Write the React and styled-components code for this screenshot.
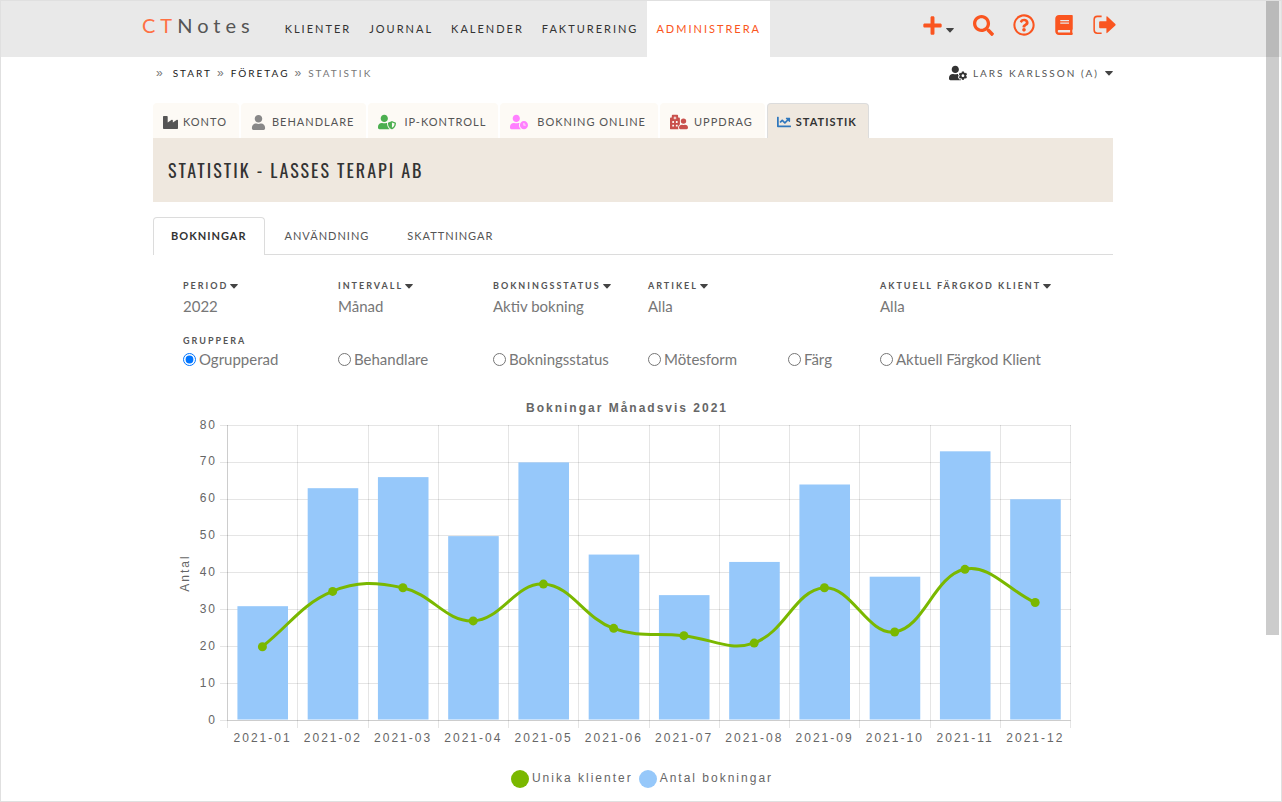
import styled, { createGlobalStyle } from 'styled-components'
import {
  FaBook,
  FaChartLine,
  FaHospitalUser,
  FaIndustry,
  FaPlus,
  FaRegQuestionCircle,
  FaSearch,
  FaUser,
  FaUserClock,
  FaUserCog,
  FaUserShield
} from 'react-icons/fa'

const GlobalStyle = createGlobalStyle`
  * {
    box-sizing: border-box;
  }
  body {
    margin: 0;
    background-color: #fff;
    color: #555;
    font-family: Lato, 'Liberation Sans', sans-serif;
    font-size: 12px;
    line-height: 16px;
  }
  button {
    border: 0;
    padding: 0;
    background: none;
    color: inherit;
    font: inherit;
    letter-spacing: inherit;
    text-transform: inherit;
    cursor: pointer;
  }
  a {
    color: inherit;
    text-decoration: none;
  }
  svg {
    display: block;
    flex: none;
  }
`

const Page = styled.div`
  position: relative;
  min-height: 100vh;
  border: 1px solid #e0e0e0;
`
const ScrollThumb = styled.div`
  position: absolute;
  top: 0;
  right: 2px;
  width: 13px;
  height: calc(100vh - 168px);
  background-color: rgba(0, 0, 0, 0.2);
`

const Header = styled.header`
  padding-right: 16px;
  background-color: #e9e9e9;
`
const HeaderInner = styled.div`
  display: flex;
  max-width: 982px;
  height: 56px;
  margin: 0 auto;
  padding-right: 8px;
`
const Logo = styled.a`
  margin-right: 21px;
  color: #555;
  font-size: 20px;
  line-height: 48px;
  letter-spacing: 5px;
  span {
    color: #ff7043;
  }
`
const Nav = styled.nav`
  display: flex;
  flex: 1;
`
const NavLink = styled.a`
  padding: 0 9px;
  background-color: ${({ $active }) => ($active ? '#fff' : 'transparent')};
  color: ${({ $active }) => ($active ? '#fa5520' : '#333')};
  font-size: 11px;
  line-height: 56px;
  letter-spacing: 2px;
  text-transform: uppercase;
`
const Tools = styled.div`
  display: flex;
  align-items: center;
  gap: 19px;
  height: 48px;
  color: #fa5520;
`
const ToolButton = styled.button`
  display: flex;
  align-items: center;
  gap: 3px;
`
const CaretSvg = styled.svg`
  margin-top: ${({ $drop }) => $drop}px;
  color: #444;
`
const Caret = ({ drop = 1 }) => (
  <CaretSvg $drop={drop} width="8" height="5" viewBox="0 0 8 5">
    <path d="M.6 0H7.400Q8.200 .1 7.700 .8L4.500 4.200Q4 4.700 3.500 4.200L.3 .8Q-.2 .1 .6 0Z" fill="currentColor" />
  </CaretSvg>
)

const Main = styled.div`
  padding-right: 16px;
`
const Column = styled.main`
  max-width: 960px;
  margin: 0 auto;
`
const TopRow = styled.div`
  display: flex;
  align-items: center;
  justify-content: space-between;
  height: 32px;
`
const Crumbs = styled.nav`
  display: flex;
  gap: 5px;
  padding-left: 3px;
  color: #777;
  font-size: 10px;
  letter-spacing: 2px;
  text-transform: uppercase;
  a {
    color: #222;
  }
`
const Separator = styled.span`
  font-family: 'Liberation Sans', Arial, sans-serif;
  font-size: 12px;
  &:first-child {
    margin-right: 3px;
  }
`
const UserMenu = styled.button`
  display: flex;
  align-items: center;
  gap: 6px;
  color: #555;
  font-size: 10px;
  letter-spacing: 2px;
  text-transform: uppercase;
`

const Tabs = styled.nav`
  display: flex;
  gap: 2px;
  margin-top: 14px;
`
const Tab = styled.a`
  display: flex;
  align-items: center;
  gap: ${({ $gap }) => $gap}px;
  height: 35px;
  padding: 2px 11px 0 9px;
  border: 1px solid ${({ $active }) => ($active ? '#dcdcdc' : '#fdfaf5')};
  border-bottom: 0;
  border-radius: 4px 4px 0 0;
  background-color: ${({ $active }) => ($active ? '#efe8df' : '#fdfaf5')};
  color: ${({ $active }) => ($active ? '#333' : '#555')};
  font-size: 11px;
  font-weight: ${({ $active }) => ($active ? 700 : 400)};
  letter-spacing: 1px;
  text-transform: uppercase;
`
const Banner = styled.div`
  padding: 16px 15px;
  background-color: #efe8df;
`
const Title = styled.h1`
  margin: 0;
  color: #333;
  font-family: Oswald, 'Roboto Condensed', 'Liberation Sans Narrow', sans-serif;
  font-size: 18px;
  font-weight: 400;
  line-height: 32px;
  letter-spacing: 2px;
  text-transform: uppercase;
`
const SubTabs = styled.nav`
  display: flex;
  gap: 2px;
  height: 38px;
  margin-top: 15px;
  border-bottom: 1px solid #dcdcdc;
`
const SubTab = styled.a`
  height: 38px;
  padding: 0 17px;
  border: 1px solid ${({ $active }) => ($active ? '#dcdcdc' : 'transparent')};
  border-bottom: 0;
  border-radius: 4px 4px 0 0;
  background-color: ${({ $active }) => ($active ? '#fff' : 'transparent')};
  color: ${({ $active }) => ($active ? '#333' : '#555')};
  font-size: 11px;
  font-weight: ${({ $active }) => ($active ? 700 : 400)};
  line-height: 36px;
  letter-spacing: 1px;
  text-transform: uppercase;
`

const Filters = styled.form`
  padding: 23px 0 0 30px;
`
const columns = '155fr 155fr 155fr 140fr 92fr 233fr'
const FilterRow = styled.div`
  display: grid;
  grid-template-columns: ${columns};
`
const Filter = styled.div`
  grid-column: span ${({ $span }) => $span || 1};
`
const FilterButton = styled.button`
  display: flex;
  align-items: center;
  gap: 2px;
  color: #555;
  font-size: 9px;
  font-weight: 700;
  line-height: 16px;
  letter-spacing: 2px;
  text-transform: uppercase;
`
const FilterValue = styled.output`
  display: block;
  color: #777;
  font-size: 15px;
  line-height: 24px;
`
const GroupBy = styled.fieldset`
  display: grid;
  grid-template-columns: ${columns};
  margin: 15px 0 0;
  border: 0;
  padding: 0;
  legend {
    padding: 0;
    color: #555;
    font-size: 9px;
    font-weight: 700;
    letter-spacing: 2px;
    text-transform: uppercase;
  }
`
const Radio = styled.label`
  display: flex;
  align-items: center;
  gap: 3px;
  color: #777;
  font-size: 15px;
  line-height: 20px;
  white-space: nowrap;
  input {
    width: 13px;
    height: 13px;
    margin: 0;
  }
`

const ChartSvg = styled.svg`
  width: 100%;
  margin-top: 26px;
  font-family: 'Liberation Sans', Arial, sans-serif;
  font-size: 12px;
  letter-spacing: 2px;
`
const Legend = styled.div`
  display: flex;
  justify-content: center;
  gap: 6px;
  margin-top: 15px;
  padding-left: 18px;
  color: #666;
  font-family: 'Liberation Sans', Arial, sans-serif;
  letter-spacing: 2px;
`
const LegendItem = styled.div`
  display: flex;
  gap: 3px;
  line-height: 16px;
  &::before {
    content: '';
    width: 18px;
    height: 18px;
    border-radius: 50%;
    background-color: ${({ $color }) => $color};
  }
`

const LogoutIcon = () => (
  <svg width="23" height="20" viewBox="0 0 24 20" fill="none">
    <path d="M9 1H4.500Q1.200 1 1.200 4.300V15.200Q1.200 18.500 4.500 18.500H9" stroke="currentColor" strokeWidth="1.600" />
    <path d="M7.500 6H14V1.400Q14 .4 15 1L23.300 9Q24 9.700 23.300 10.400L15 18.200Q14 18.900 14 17.900V13.500H7.500Q6.400 13.500 6.400 12.400V7.100Q6.400 6 7.500 6Z" fill="currentColor" />
  </svg>
)

const navItems = ['Klienter', 'Journal', 'Kalender', 'Fakturering', 'Administrera']

const tabs = [
  { label: 'Konto', Icon: FaIndustry, color: '#555', size: 15, gap: 5 },
  { label: 'Behandlare', Icon: FaUser, color: '#888', size: 15, gap: 6 },
  { label: 'IP-kontroll', Icon: FaUserShield, color: '#4caf50', size: 18, gap: 8 },
  { label: 'Bokning online', Icon: FaUserClock, color: '#ff80ff', size: 18, gap: 9 },
  { label: 'Uppdrag', Icon: FaHospitalUser, color: '#c9504c', size: 18, gap: 6 },
  { label: 'Statistik', Icon: FaChartLine, color: '#2f77bd', size: 14, gap: 5 }
]

const filters = [
  { label: 'Period', value: '2022' },
  { label: 'Intervall', value: 'Månad' },
  { label: 'Bokningsstatus', value: 'Aktiv bokning' },
  { label: 'Artikel', value: 'Alla', span: 2 },
  { label: 'Aktuell färgkod klient', value: 'Alla' }
]

const groups = ['Ogrupperad', 'Behandlare', 'Bokningsstatus', 'Mötesform', 'Färg', 'Aktuell Färgkod Klient']

const bookings = [31, 63, 66, 50, 70, 45, 34, 43, 64, 39, 73, 60]
const clients = [20, 35, 36, 27, 37, 25, 23, 21, 36, 24, 41, 32]

const plot = { left: 74, right: 917, top: 30, bottom: 325 }
const step = (plot.right - plot.left) / bookings.length
const toY = (value) => plot.bottom - (value / 80) * (plot.bottom - plot.top)
const toX = (index) => plot.left + step * (index + 0.5)

// smooth curve, control points weighted by the distance to each neighbour
const curve = (points, tension = 0.4) => {
  const handles = points.map((point, i) => {
    const prev = points[i - 1] || point
    const next = points[i + 1] || point
    const before = Math.hypot(point.x - prev.x, point.y - prev.y)
    const after = Math.hypot(next.x - point.x, next.y - point.y)
    const a = (tension * before) / (before + after)
    const b = (tension * after) / (before + after)
    const dx = next.x - prev.x
    const dy = next.y - prev.y
    return {
      left: `${point.x - a * dx} ${point.y - a * dy}`,
      right: `${point.x + b * dx} ${point.y + b * dy}`
    }
  })
  return points
    .map(({ x, y }, i) =>
      i === 0 ? `M${x} ${y}` : `C${handles[i - 1].right} ${handles[i].left} ${x} ${y}`
    )
    .join('')
}

const Chart = () => {
  const points = clients.map((value, i) => ({ x: toX(i), y: toY(value) + 0.5 }))
  return (
    <ChartSvg viewBox="0 0 960 360" role="img" aria-label="Bokningar Månadsvis 2021">
      <text x="474" y="17" fill="#666" fontWeight="700" textAnchor="middle">
        Bokningar Månadsvis 2021
      </text>
      <text transform="translate(36 178) rotate(-90)" fill="#666" textAnchor="middle">
        Antal
      </text>
      {[0, 10, 20, 30, 40, 50, 60, 70, 80].map((value) => {
        const y = Math.round(toY(value) - 0.15)
        return (
          <g key={value}>
            <rect x={plot.left - 7} y={y} width={plot.right - plot.left + 8} height="1" fill="rgba(0,0,0,0.1)" />
            <text x={plot.left - 10} y={Math.floor(toY(value)) + 4} fill="#666" textAnchor="end">
              {value}
            </text>
          </g>
        )
      })}
      {[...bookings, null].map((_, i) => (
        <rect key={i} x={Math.round(plot.left + step * i)} y={plot.top} width="1" height={plot.bottom - plot.top + 8} fill="rgba(0,0,0,0.1)" />
      ))}
      <rect x={plot.left} y={plot.top} width="1" height={plot.bottom - plot.top} fill="rgba(0,0,0,0.1)" />
      <rect x={plot.left} y={plot.bottom} width={plot.right - plot.left} height="1" fill="rgba(0,0,0,0.1)" />
      {bookings.map((value, i) => (
        <g key={i}>
          <rect x={toX(i) - 24.7} y={toY(value) + 0.5} width={step * 0.72} height={plot.bottom - toY(value) - 1} fill="#96c8fa" />
          <text x={toX(i) + 0.5} y="347" fill="#666" textAnchor="middle">
            {`2021-${String(i + 1).padStart(2, '0')}`}
          </text>
        </g>
      ))}
      <path d={curve(points)} fill="none" stroke="#7ab800" strokeWidth="3" />
      {points.map(({ x, y }) => (
        <circle key={x} cx={x + 0.3} cy={y} r="4.500" fill="#7ab800" />
      ))}
    </ChartSvg>
  )
}

const App = () => (
  <>
    <GlobalStyle />
    <Page>
      <Header>
        <HeaderInner>
          <Logo href="#">
            <span>CT</span>Notes
          </Logo>
          <Nav>
            {navItems.map((item) => (
              <NavLink key={item} href="#" $active={item === 'Administrera'}>
                {item}
              </NavLink>
            ))}
          </Nav>
          <Tools>
            <ToolButton aria-label="Ny">
              <FaPlus size={21} />
              <Caret drop={10} />
            </ToolButton>
            <ToolButton aria-label="Sök">
              <FaSearch size={21} />
            </ToolButton>
            <ToolButton aria-label="Hjälp">
              <FaRegQuestionCircle size={22} />
            </ToolButton>
            <ToolButton aria-label="Manual">
              <FaBook size={20} />
            </ToolButton>
            <ToolButton aria-label="Logga ut">
              <LogoutIcon />
            </ToolButton>
          </Tools>
        </HeaderInner>
      </Header>
      <Main>
        <Column>
          <TopRow>
            <Crumbs>
              <Separator>»</Separator>
              <a href="#">Start</a>
              <Separator>»</Separator>
              <a href="#">Företag</a>
              <Separator>»</Separator>
              <span>Statistik</span>
            </Crumbs>
            <UserMenu>
              <FaUserCog size={18} color="#333" />
              Lars Karlsson (A)
              <Caret />
            </UserMenu>
          </TopRow>
          <Tabs>
            {tabs.map(({ label, Icon, color, size, gap }) => (
              <Tab key={label} href="#" $gap={gap} $active={label === 'Statistik'}>
                <Icon size={size} color={color} />
                {label}
              </Tab>
            ))}
          </Tabs>
          <Banner>
            <Title>Statistik - Lasses Terapi AB</Title>
          </Banner>
          <SubTabs>
            <SubTab href="#" $active>
              Bokningar
            </SubTab>
            <SubTab href="#">Användning</SubTab>
            <SubTab href="#">Skattningar</SubTab>
          </SubTabs>
          <Filters>
            <FilterRow>
              {filters.map(({ label, value, span }) => (
                <Filter key={label} $span={span}>
                  <FilterButton type="button">
                    {label}
                    <Caret />
                  </FilterButton>
                  <FilterValue>{value}</FilterValue>
                </Filter>
              ))}
            </FilterRow>
            <GroupBy>
              <legend>Gruppera</legend>
              {groups.map((group, i) => (
                <Radio key={group}>
                  <input type="radio" name="group" defaultChecked={i === 0} />
                  {group}
                </Radio>
              ))}
            </GroupBy>
          </Filters>
          <Chart />
          <Legend>
            <LegendItem $color="#7ab800">Unika klienter</LegendItem>
            <LegendItem $color="#96c8fa">Antal bokningar</LegendItem>
          </Legend>
        </Column>
      </Main>
      <ScrollThumb />
    </Page>
  </>
)

export default App
